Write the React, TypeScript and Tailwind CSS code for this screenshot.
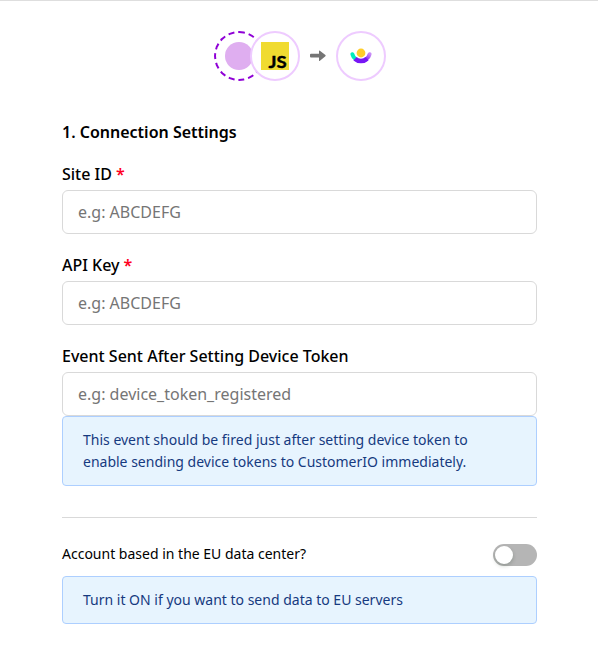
import type { ReactNode } from "react";

function Label({ children, required }: { children: ReactNode; required?: boolean }) {
  return (
    <div className="flex h-8 items-center text-base font-medium text-black">
      <span>{children}</span>
      {required && <span className="ml-1 font-semibold text-[#ff0022]">*</span>}
    </div>
  );
}

function Field({ label, placeholder, required }: { label: string; placeholder: string; required?: boolean }) {
  return (
    <div>
      <Label required={required}>{label}</Label>
      <input
        className="block h-11 w-full rounded-md border border-[#d9d9d9] bg-white px-[15px] text-base text-black placeholder:text-[#757575] focus:outline-none"
        placeholder={placeholder}
      />
    </div>
  );
}

function Note({ children }: { children: ReactNode }) {
  return (
    <div className="rounded border border-[#adcfff] bg-[#e7f4fe] px-5 py-3 text-sm leading-[22px] text-[#163a80]">
      {children}
    </div>
  );
}

function Flow() {
  return (
    <div className="flex h-[50px] items-center pl-[214px]">
      <div className="flex size-[50px] items-center justify-center rounded-full border-2 border-dashed border-[#8f00d6]">
        <div className="size-7 rounded-full bg-[#dfaef0]" />
      </div>
      <svg className="relative -ml-3.5" width="50" height="50" viewBox="0 0 50 50">
        <circle cx="25" cy="25" r="24" fill="white" stroke="#eecbff" strokeWidth="2" />
        <rect x="11" y="11" width="28" height="28" fill="#f0db30" />
        <text x="18.6" y="36.8" fontSize="17.5" fontWeight="700" fontFamily="Lato, sans-serif" stroke="black" strokeWidth="0.4" textLength="18.2" lengthAdjust="spacingAndGlyphs">JS</text>
      </svg>
      <svg className="ml-2.5" width="16" height="12" viewBox="0 0 16 12">
        <path d="M1 3.8H9V1.2Q9 0 9.9.7L15.4 5.1Q16 5.7 15.4 6.3L9.9 10.8Q9 11.5 9 10.4V7.6H1Q0 7.6 0 6.6V4.8Q0 3.8 1 3.8Z" fill="#757575" />
      </svg>
      <svg className="ml-2.5" width="50" height="50" viewBox="0 0 50 50">
        <defs>
          <linearGradient id="smileRight" x1="29" y1="29" x2="34" y2="23" gradientUnits="userSpaceOnUse">
            <stop stopColor="#7716f5" />
            <stop offset="1" stopColor="#c88cf5" />
          </linearGradient>
        </defs>
        <circle cx="25" cy="25" r="24" fill="white" stroke="#eecbff" strokeWidth="2" />
        <path d="M16.4 23.2C17 25.6 18 27 19.7 28.2" fill="none" stroke="#00ecbb" strokeWidth="4" strokeLinecap="round" />
        <path d="M30 28.4C31.9 27.2 33 25.5 33.6 23.2" fill="none" stroke="url(#smileRight)" strokeWidth="4" strokeLinecap="round" />
        <path d="M19 27.8C22.2 30.8 27.8 30.8 31 27.8" fill="none" stroke="#7716f5" strokeWidth="4.6" />
        <circle cx="25" cy="22" r="5" fill="white" />
        <circle cx="25" cy="22" r="4.4" fill="#ffcd29" />
      </svg>
    </div>
  );
}

export default function App() {
  return (
    <main className="min-h-[661px] w-[598px] border-t border-[#dedede] bg-white pt-[30px] font-['Noto_Sans',sans-serif]">
      <Flow />
      <section className="mt-10 ml-[62px] w-[475px]">
        <h2 className="mb-[15px] text-base leading-[22px] font-semibold text-black">1. Connection Settings</h2>
        <div className="flex flex-col gap-[15px]">
          <Field label="Site ID" placeholder="e.g: ABCDEFG" required />
          <Field label="API Key" placeholder="e.g: ABCDEFG" required />
          <div>
            <Field label="Event Sent After Setting Device Token" placeholder="e.g: device_token_registered" />
            <Note>
              This event should be fired just after setting device token to
              <br />
              enable sending device tokens to CustomerIO immediately.
            </Note>
          </div>
        </div>
        <hr className="mt-[31px] border-[#d9d9d9]" />
        <div className="mt-[26px] mb-2.5 flex h-[22px] items-start justify-between">
          <span className="text-sm leading-5 text-black">Account based in the EU data center?</span>
          <button type="button" role="switch" aria-checked="false" aria-label="EU data center" className="flex h-[22px] w-11 items-center rounded-full bg-[#b5b5b5] p-0.5">
            <span className="size-[18px] rounded-full bg-white shadow-[0_2px_4px_rgba(0,35,11,0.2)]" />
          </button>
        </div>
        <Note>Turn it ON if you want to send data to EU servers</Note>
      </section>
    </main>
  );
}
